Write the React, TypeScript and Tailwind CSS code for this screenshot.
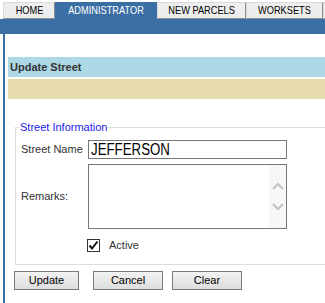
import React from "react";

const BLUE = "#3b6ea5";

function Tab({ label, w, active }: { label: string; w: string; active?: boolean }) {
  if (active) {
    return (
      <div className={`${w} shrink-0 h-[17px] flex items-center justify-center text-white text-[11px] bg-[#3b6ea5]`}>
        <span className="inline-block scale-x-[0.84] whitespace-nowrap">{label}</span>
      </div>
    );
  }
  return (
    <div
      className={`${w} shrink-0 h-[17px] flex items-center justify-center text-black text-[11px] bg-[#eeeeee] border border-[#dadada] border-b-[#8e8e8e] border-r-[#8e8e8e]`}
    >
      <span className="inline-block scale-x-[0.84] whitespace-nowrap">{label}</span>
    </div>
  );
}

function Btn({ label, w }: { label: string; w: string }) {
  return (
    <div
      className={`${w} shrink-0 h-[19px] flex items-center justify-center text-[11px] text-black border border-[#7a7a7a] bg-gradient-to-b from-[#f3f3f3] to-[#dddddd]`}
    >
      {label}
    </div>
  );
}

export default function App() {
  return (
    <div
      className="w-[325px] h-[303px] bg-white overflow-hidden"
      style={{ fontFamily: '"Liberation Sans", Arial, sans-serif' }}
    >
      {/* tabs */}
      <div className="flex h-[19px] pt-[2px] pl-[3px] items-start">
        <Tab label="HOME" w="w-[52px]" />
        <div className="shrink-0 h-[17px] bg-[#3b6ea5] flex">
          <Tab label="ADMINISTRATOR" w="w-[102px]" active />
        </div>
        <div className="shrink-0 h-[17px] bg-[#3b6ea5] flex">
          <Tab label="NEW PARCELS" w="w-[89px]" />
          <Tab label="WORKSETS" w="w-[77px]" />
          <Tab label="" w="w-[20px]" />
        </div>
      </div>
      {/* band */}
      <div className="h-[15px]" style={{ backgroundColor: BLUE }} />
      {/* content */}
      <div className="ml-[3px] border-l-2 border-[#3b6ea5] pl-[3px] h-[270px]">
        <div className="h-[23px]" />
        <div className="h-[20px] bg-[#add8e6] flex items-center pl-[2px] text-[11px] font-bold text-[#333333]">
          Update Street
        </div>
        <div className="h-[20px] mt-[2px] bg-[#e6dbae]" />

        {/* fieldset */}
        <div className="relative mt-[28px] ml-[7px] w-[320px] border border-[#dddddd] pt-[12px] pl-[5px] pb-[10px]">
          <div className="absolute -top-[8px] left-[3px] bg-white px-[1px] text-[11px] leading-[14px] text-[#1a1aee]">
            Street Information
          </div>
          <div className="flex items-center">
            <div className="w-[67px] text-[11px] text-[#333333]">Street Name</div>
            <div className="w-[199px] h-[19px] border border-[#777777] flex items-center pl-[2px] text-[16px] text-black">
              <span className="inline-block scale-x-[0.83] origin-left whitespace-nowrap">JEFFERSON</span>
            </div>
          </div>
          <div className="flex items-center mt-[5px]">
            <div className="w-[67px] text-[11px] text-[#333333]">Remarks:</div>
            <div className="w-[199px] h-[65px] border border-[#777777] flex justify-end">
              <div className="w-[17px] h-full bg-[#f7f7f7] flex flex-col items-center pt-[17px]">
                <svg width="12" height="8" viewBox="0 0 12 8">
                  <path d="M1 7 L6 2 L11 7" fill="none" stroke="#c2c2c2" strokeWidth="2" />
                </svg>
                <svg width="12" height="8" viewBox="0 0 12 8" className="mt-[13px]">
                  <path d="M1 1 L6 6 L11 1" fill="none" stroke="#c2c2c2" strokeWidth="2" />
                </svg>
              </div>
            </div>
          </div>
          <div className="flex items-center mt-[8px] ml-[66px]">
            <div className="w-[13px] h-[13px] border border-[#333333] bg-white flex items-center justify-center">
              <svg width="11" height="11" viewBox="0 0 11 11">
                <path d="M1.5 5.5 L4 8.5 L9.5 1.5" fill="none" stroke="#111111" strokeWidth="2" />
              </svg>
            </div>
            <div className="ml-[9px] text-[11px] text-[#333333]">Active</div>
          </div>
        </div>

        {/* buttons */}
        <div className="flex mt-[6px] ml-[6px]">
          <Btn label="Update" w="w-[65px]" />
          <div className="w-[14px]" />
          <Btn label="Cancel" w="w-[70px]" />
          <div className="w-[9px]" />
          <Btn label="Clear" w="w-[70px]" />
        </div>
      </div>
    </div>
  );
}
